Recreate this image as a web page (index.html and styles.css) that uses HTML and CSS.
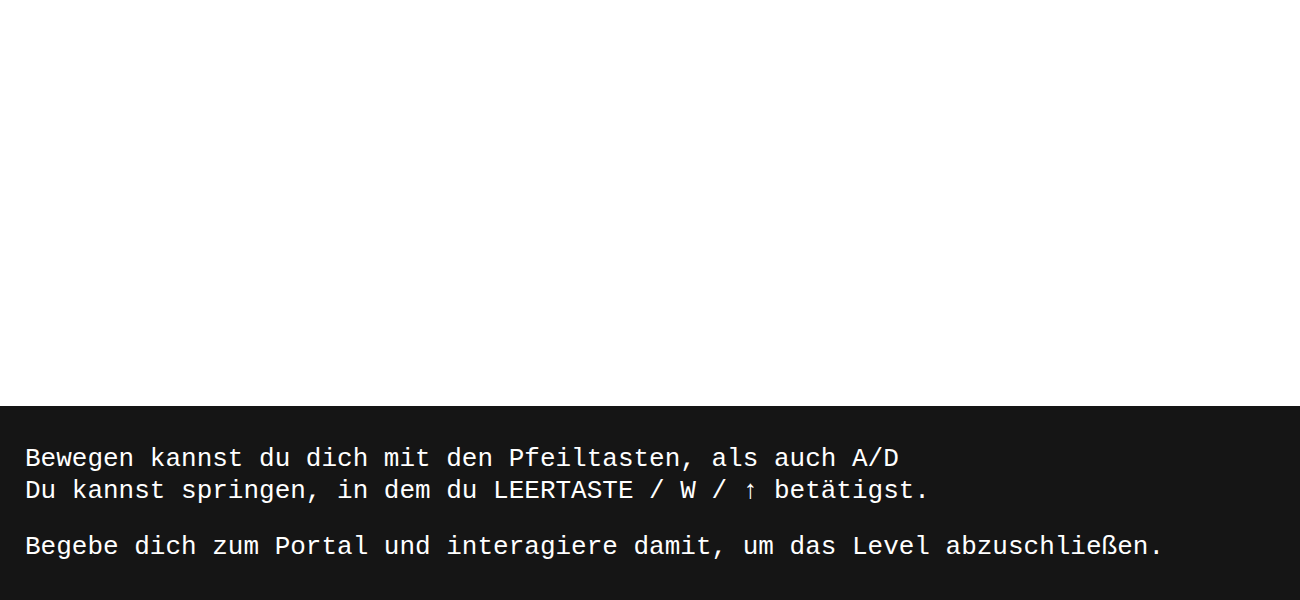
FILE: index.html
```html
<!DOCTYPE html>
<html lang="de">
<head>
<meta charset="utf-8">
<title>Level</title>
<link rel="stylesheet" href="styles.css">
</head>
<body>
<div class="game"></div>
<section class="info">
  <p class="line">Bewegen kannst du dich mit den Pfeiltasten, als auch A/D<br>Du kannst springen, in dem du LEERTASTE / W / ↑ betätigst.</p>
  <p class="line">Begebe dich zum Portal und interagiere damit, um das Level abzuschließen.</p>
</section>
</body>
</html>
```
FILE: styles.css
```css
html, body {
  margin: 0;
  padding: 0;
  background: #ffffff;
}
.game {
  height: 406px;
  background: #ffffff;
}
.info {
  background: #151515;
  color: #ffffff;
  font-family: "Liberation Mono", monospace;
  font-size: 26px;
  line-height: 32px;
  padding: 37px 24px 37px 25px;
}
.line {
  margin: 0 0 24px;
}
.line:last-child {
  margin-bottom: 0;
}
```
